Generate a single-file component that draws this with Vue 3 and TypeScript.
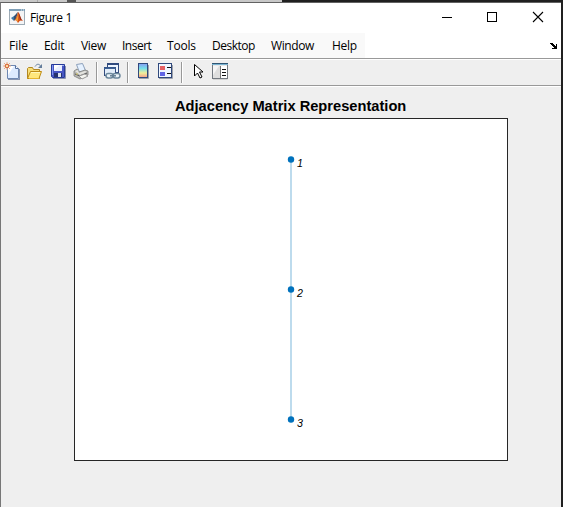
<script setup lang="ts">
interface MenuItem { label: string; width: number; spacing: number }
interface GraphNode { id: number; x: number; y: number }

const menu: MenuItem[] = [
  { label: 'File', width: 35, spacing: 0 },
  { label: 'Edit', width: 37, spacing: -0.3 },
  { label: 'View', width: 41, spacing: -0.3 },
  { label: 'Insert', width: 45, spacing: -0.5 },
  { label: 'Tools', width: 45, spacing: -0.2 },
  { label: 'Desktop', width: 59, spacing: -0.5 },
  { label: 'Window', width: 61, spacing: -0.4 },
  { label: 'Help', width: 32, spacing: -0.3 },
]

const nodes: GraphNode[] = [
  { id: 1, x: 216.5, y: 41.5 },
  { id: 2, x: 216.5, y: 171.5 },
  { id: 3, x: 216.5, y: 301.5 },
]
</script>

<template>
  <div class="screen">
    <div class="backdrop"><i class="tab"></i><i class="tab second"></i><i class="mark"></i></div>
    <div class="window">
      <header class="titlebar">
        <svg class="logo" width="16" height="16" viewBox="0 0 16 16">
          <rect x=".5" y=".5" width="15" height="15" fill="#f4f4f5" stroke="#9eabb5" />
          <path d="M0 0h16v2H0z" fill="#7f9fb7" />
          <path d="M12 1h1M14 1h1" stroke="#e6f0f5" />
          <path d="M2 9l3-2 2 2-2 3z" fill="#3b78a7" />
          <path d="M5 7c2-1 2-3 4-4L7 10l-2 1z" fill="#354e70" />
          <path d="M9 3c2 1 2 6 5 9-2-1-3-1-5 2l-2-3-2 1c2-2 3-6 4-9z" fill="#d95319" />
          <path d="M9 4c-.2 3-1 5-2.4 6.500L9 13c-.7-2 1-5 0-9z" fill="#f0a13a" />
          <path d="M9.500 3.500c1 1 2 6 3.500 8l-2-1z" fill="#8d271e" />
        </svg>
        <span class="name">Figure 1</span>
        <svg class="controls" width="102" height="11" viewBox="0 0 102 11">
          <path d="M0 5.500h10" stroke="#000" shape-rendering="crispEdges" />
          <rect x="45.500" y=".5" width="9" height="9" fill="none" stroke="#000" shape-rendering="crispEdges" />
          <path d="M91 0l10 10M101 0L91 10" stroke="#000" stroke-width="1.100" />
        </svg>
      </header>
      <nav class="menubar">
        <div class="menus">
          <span
            v-for="item in menu"
            :key="item.label"
            :style="{ width: item.width + 'px', letterSpacing: item.spacing + 'px' }"
          >{{ item.label }}</span>
        </div>
        <svg class="dock" width="7" height="6" viewBox="0 0 7 6" shape-rendering="crispEdges">
          <path d="M0 0h3v1h1v1h1v1h1V1h1v5H2V5h2V4H3V3H2V2H1V1H0z" />
        </svg>
      </nav>
      <div class="toolbar">
        <svg class="new" width="18" height="18" viewBox="0 0 18 18">
          <path d="M3.500 2.500h8l3 3v10h-11z" fill="#eaf3ff" stroke="#6e88b2" />
          <path d="M4 3h7v3h3v9H4z" fill="#dceaff" /><path d="M4 3h6L4 12z" fill="#fff" />
          <path d="M11.500 2.500v3h3" fill="#fff" stroke="#526f9e" />
          <path d="M15.500 6v10M4 16.500h12" stroke="#8795b2" />
          <path d="M0 0l6 6M6 0L0 6M3-1v8M-1 3h8" stroke="#ecae83" />
          <circle cx="3" cy="3" r="1.800" fill="#ffdda2" stroke="#d66134" />
        </svg>
        <svg class="open" width="18" height="18" viewBox="0 0 18 18">
          <path d="M1.500 15.500v-10l1-1h4l1 2h6v9z" fill="#f8df77" stroke="#b18622" />
          <path d="M1.500 15.500l3-7h11l-2.500 7H2z" fill="#ffe77c" stroke="#be8b14" />
          <path d="M5 9.500h9" stroke="#fff8bb" /><path d="M3 15.500h10" stroke="#e7b52e" />
          <path d="M9 3.500c2-3 4-3 6 0" fill="none" stroke="#63809f" />
          <path d="M16 1v4h-4z" fill="#657e9c" />
        </svg>
        <svg class="save" width="16" height="18" viewBox="0 0 16 18">
          <path d="M1.500 1.500h13v13h-12l-1-1z" fill="#4856c4" stroke="#263b99" />
          <path d="M4 2h8v6H4z" fill="#e9efff" /><path d="M4 2h6L4 7z" fill="#fff" />
          <path d="M2.500 2v10" stroke="#8396f0" />
          <path d="M4 10h8v4H4z" fill="#25326e" /><path d="M8 10h3v4H8z" fill="#dce3ef" />
          <path d="M12 2.500h2" stroke="#9dadf0" /><path d="M15.500 3v12.500H3" fill="none" stroke="#8b91b0" />
        </svg>
        <svg class="print" width="18" height="18" viewBox="0 0 18 18">
          <path d="M4.500 1.500l6-1 3 7-6 2z" fill="#e5f1ff" stroke="#8ca0bb" />
          <path d="M2 8l3-2 2 3 6-2 3 1v4l-8 4-6-3z" fill="#b6b6b3" stroke="#80817f" stroke-width=".8" />
          <path d="M3 8l3-1 1 3 6-2 2 1-7 3z" fill="#e4e4df" />
          <path d="M3 11l5 2 7-3" fill="none" stroke="#555" />
          <path d="M7 13l6-2 3 2-6 3z" fill="#f4f4ef" stroke="#999" />
          <path d="M4 11h2" stroke="#d9ca62" />
        </svg>
        <i class="separator"></i>
        <svg class="link" width="18" height="18" viewBox="0 0 18 18">
          <rect x="4.500" y=".5" width="11" height="9" fill="#edf5ff" stroke="#314b7e" />
          <path d="M4 1.200h12" stroke="#314b7e" stroke-width="1.600" />
          <rect x="1.500" y="4.500" width="11" height="8" fill="#e2edf9" stroke="#314b7e" />
          <path d="M1 5.200h12" stroke="#3c6094" stroke-width="1.600" />
          <rect x="3" y="10.500" width="7" height="4.500" rx="2.200" fill="#e9f2f8" stroke="#6b879c" stroke-width="1.500" />
          <rect x="10" y="10.500" width="7" height="4.500" rx="2.200" fill="#e9f2f8" stroke="#6b879c" stroke-width="1.500" />
          <path d="M7 12.800h6" stroke="#657f94" stroke-width="1.500" />
        </svg>
        <i class="separator"></i>
        <svg class="colorbar" width="13" height="18" viewBox="0 0 13 18">
          <defs><linearGradient id="spectrum" x2="0" y2="1">
            <stop stop-color="#889bf1" /><stop offset=".35" stop-color="#75dfea" />
            <stop offset=".68" stop-color="#f2ee98" /><stop offset="1" stop-color="#f49b8b" />
          </linearGradient></defs>
          <path d="M11.500 2v13.500H2" fill="none" stroke="#9da1aa" />
          <rect x="1.500" y=".5" width="9" height="14" fill="url(#spectrum)" stroke="#30497c" />
        </svg>
        <svg class="legend" width="17" height="18" viewBox="0 0 17 18">
          <path d="M15.500 2v13.500H2" fill="none" stroke="#9da1aa" />
          <rect x="1.500" y=".5" width="13" height="14" fill="#f0f6ff" stroke="#30497c" />
          <path d="M3 3h5v4H3z" fill="#e66164" /><path d="M3 9h5v4H3z" fill="#6165e5" />
          <path d="M10 4.500h4M10 10.500h4" stroke="#111" />
        </svg>
        <i class="separator"></i>
        <svg class="pointer" width="12" height="18" viewBox="0 0 12 18">
          <path d="M1.500 1.500v11.500l3-3 2.500 5 2-1-2.500-5h3.500z" fill="#fff" stroke="#000" />
        </svg>
        <svg class="inspector" width="18" height="18" viewBox="0 0 18 18">
          <path d="M16.500 2v14H2" fill="none" stroke="#b7b7b7" />
          <rect x="1.500" y=".5" width="15" height="15" fill="#e8e8e8" stroke="#737980" />
          <path d="M1 0h16v1H1z" fill="#315673" /><path d="M1 1h16v1H1z" fill="#79b3d2" />
          <path d="M2 3h7v12H2z" fill="#dedede" /><path d="M2 3h6l-6 9z" fill="#f5f5f5" />
          <path d="M9.500 3v12" stroke="#777" /><path d="M10 3h6v12h-6z" fill="#fff" />
          <path d="M11 6.500h4M11 9.500h4M11 12.500h4" stroke="#111" />
        </svg>
      </div>
      <main class="figure">
        <h1>Adjacency Matrix Representation</h1>
        <svg class="plot" width="434" height="343" viewBox="0 0 434 343">
          <rect x=".5" y=".5" width="433" height="342" fill="#fff" stroke="#262626" />
          <path d="M217 41v260" stroke="#bddbed" stroke-width="2" />
          <g v-for="node in nodes" :key="node.id">
            <circle :cx="node.x + .5" :cy="node.y" r="3.200" fill="#0072bd" />
            <text :x="node.x + 6.500" :y="node.y + 7.500">{{ node.id }}</text>
          </g>
        </svg>
      </main>
    </div>
  </div>
</template>

<style>
body { margin: 0; overflow: hidden; }
</style>
<style scoped>
.screen { box-sizing: border-box; width: 563px; height: 507px; background: #202020; overflow: hidden; }
.backdrop { width: 282px; height: 2px; background: #c8c8c8; display: flex; }
.tab { width: 37px; border-right: 1px solid #a9a9a9; }
.tab.second { width: 28px; border: 0; }
.mark { width: 9px; height: 2px; margin-left: 1px; background: #555; }
.window { box-sizing: border-box; width: 561px; height: 505px; border-top: 1px solid #626262; border-left: 1px solid #777; background: #fff; }
.titlebar { box-sizing: border-box; height: 30px; padding: 6px 17px 0 8px; display: flex; align-items: flex-start; }
.logo { flex: none; }
.name { margin-left: 5px; font: 12px/18px "Open Sans", "Noto Sans", sans-serif; letter-spacing: -.35px; color: #000; }
.controls { margin: 3px 0 0 auto; overflow: visible; }
.menubar { height: 25px; display: flex; justify-content: space-between; }
.menus { box-sizing: border-box; width: 364px; padding-left: 8px; display: flex; background: #f9f9f9; font: 12px/26px "Open Sans", "Noto Sans", sans-serif; color: #000; white-space: nowrap; }
.menus span { flex: none; }
.dock { margin: 10px 4px 0 0; }
.toolbar { box-sizing: border-box; height: 28px; padding: 4px 0 0 3px; display: flex; background: #efefef; border-top: 1px solid #999; border-bottom: 1px solid #999; box-shadow: inset 0 1px #fff, 0 1px #fff; position: relative; }
.toolbar svg { flex: none; overflow: visible; }
.open { margin-left: 4px; }
.save, .print { margin-left: 6px; }
.separator { width: 1px; height: 21px; margin: -1px 0 0 6px; background: #999; border-right: 1px solid #fff; }
.link { margin-left: 5px; }
.colorbar { margin-left: 8px; }
.legend { margin-left: 7px; }
.legend + .separator { margin-left: 7px; }
.pointer { margin-left: 10px; }
.inspector { margin-left: 6px; }
.figure { height: 421px; padding-top: 11px; background: #efefef; }
h1 { margin: 0 0 3px 174px; font: bold 14.670px/18px "Liberation Sans", Arial, sans-serif; color: #000; white-space: nowrap; }
.plot { display: block; margin-left: 73px; }
.plot text { font: italic 10.700px "Liberation Sans", Arial, sans-serif; fill: #000; }
</style>
